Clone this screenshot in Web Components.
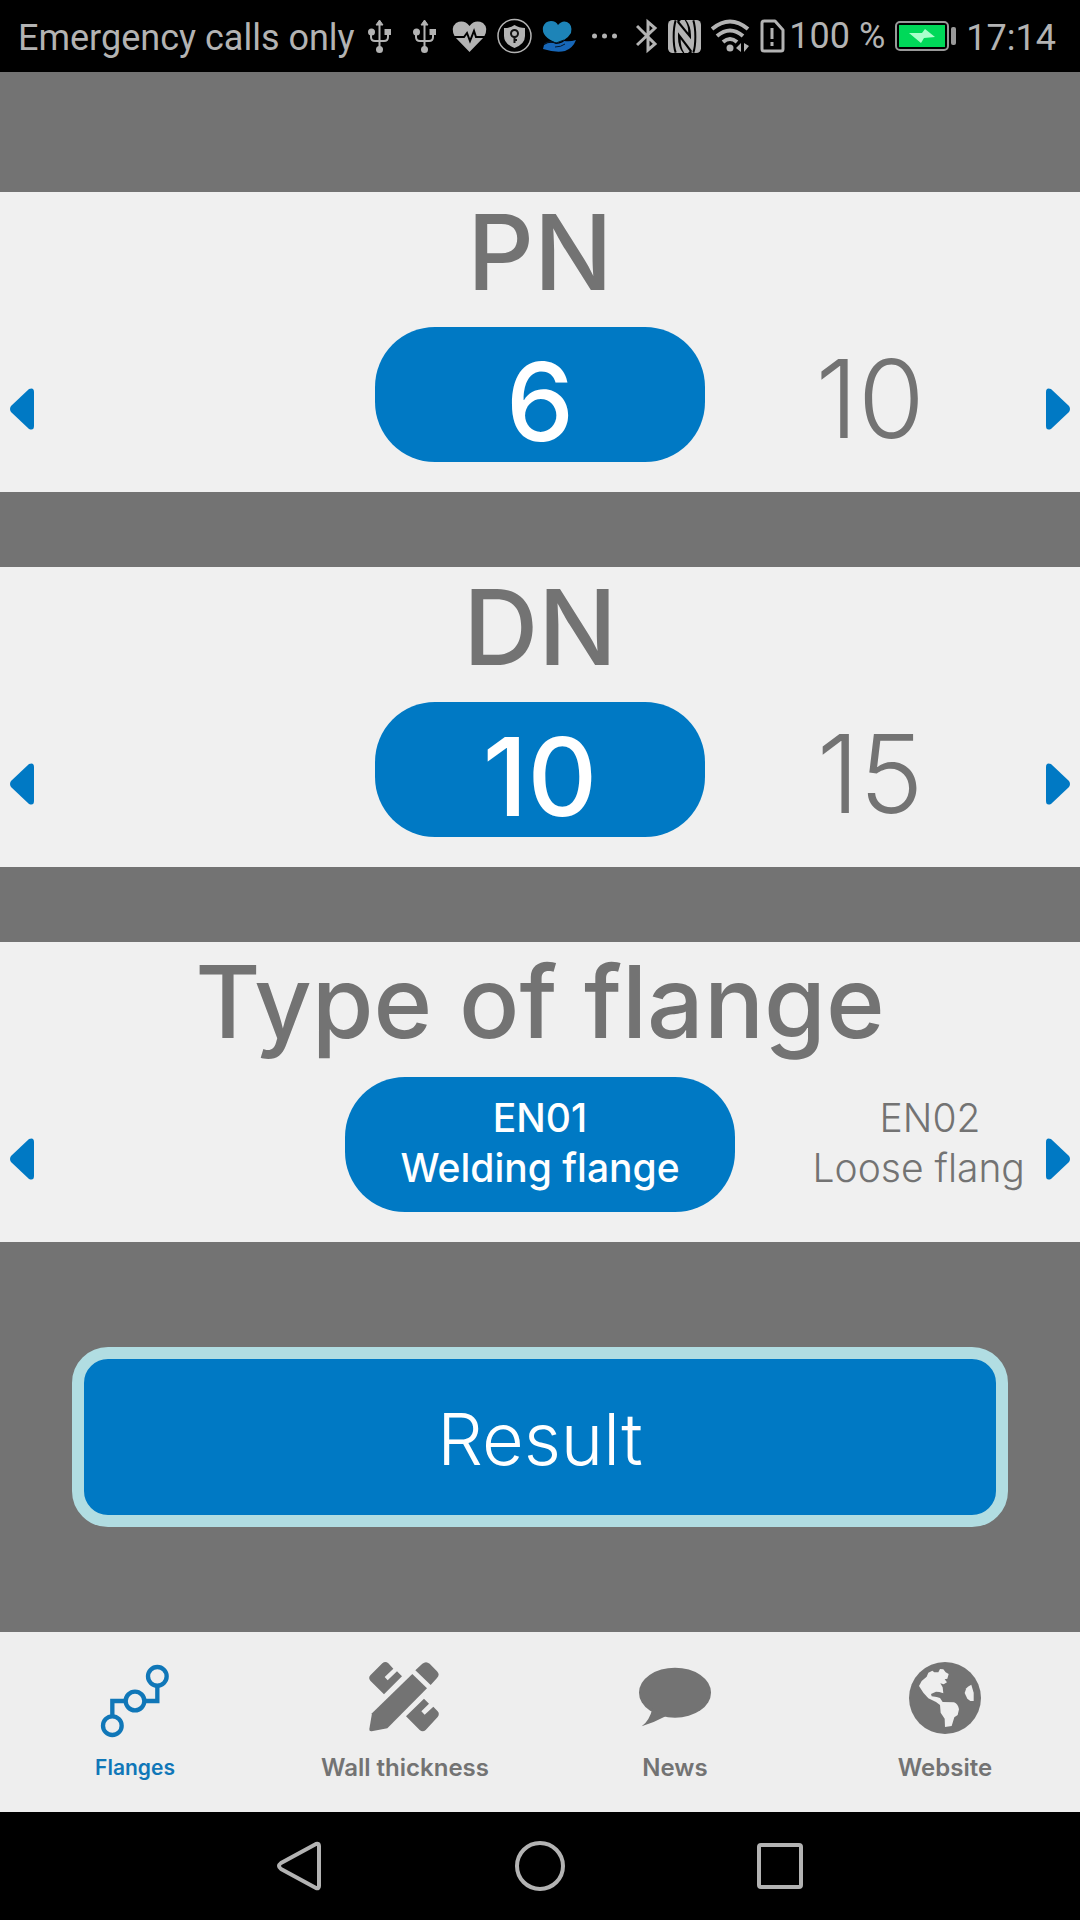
<!DOCTYPE html>
<html lang="en">
<head>
<meta charset="utf-8">
<meta name="viewport" content="width=device-width, initial-scale=1">
<title>Flanges</title>
<style>
    body {
        margin: 0;
        background-color: #737373;
        font-family: Inter, "Liberation Sans", sans-serif;
    }
</style>
</head>
<body>
<flange-app></flange-app>

<script>
class StatusBar extends HTMLElement {
    constructor() {
        super();
        this.shadow = this.attachShadow({ mode: "open" });
    }

    connectedCallback() {
        this.render();
    }

    render() {
        const usb = `
            <svg width="45" height="36" viewBox="0 0 45 36" fill="none" stroke="#b3b3b3" stroke-width="2">
                <path d="M22.500 5V32M14 13V19Q14 23 18 23H27Q31 23 31 19V13"/>
                <path d="M22.500 2L26 7H19Z" fill="#b3b3b3" stroke-width="1"/>
                <circle cx="14.500" cy="14" r="3.500" fill="#b3b3b3" stroke="none"/>
                <path d="M27.500 11H34V17H27.500Z" fill="#b3b3b3" stroke="none"/>
                <circle cx="22.500" cy="31.500" r="3.500" fill="#b3b3b3" stroke="none"/>
            </svg>`;

        this.shadow.innerHTML = `
            <style>
                :host {
                    display: flex;
                    align-items: center;
                    height: 72px;
                    padding: 0 24px 0 18px;
                    background-color: #000;
                    color: #b3b3b3;
                    font-family: Roboto, "Liberation Sans", sans-serif;
                    font-size: 36px;
                    line-height: 72px;
                    white-space: nowrap;
                }

                svg {
                    display: block;
                    flex: none;
                }

                .notifications, .system, .radios, .power {
                    display: flex;
                    align-items: center;
                }

                .notifications {
                    margin-left: 2px;
                }

                .system {
                    margin-left: auto;
                    gap: 4px;
                }

                .radios, .power {
                    gap: 10px;
                }

                .carrier, .clock {
                    padding-top: 4px;
                }
            </style>

            <span class="carrier">Emergency calls only</span>
            <div class="notifications">
                ${usb}
                ${usb}
                <svg width="45" height="36" viewBox="0 0 45 36">
                    <path fill="#b3b3b3" d="M22.500 34L8 19Q3 10 9 5Q17 1 22.500 8Q28 1 36 5Q42 10 37 19Z"/>
                    <path fill="none" stroke="#000" stroke-width="2" d="M5 19H17L20 15L23 23L27 13L29 19H40"/>
                </svg>
                <svg width="45" height="36" viewBox="0 0 45 36">
                    <circle cx="22.500" cy="18" r="16.500" fill="none" stroke="#b3b3b3" stroke-width="1.500"/>
                    <path fill="#b3b3b3" d="M12 10Q18 10 22.500 7Q27 10 33 10V18Q33 26 22.500 30Q12 26 12 18Z"/>
                    <circle cx="22.500" cy="15.500" r="3.500" fill="none" stroke="#111" stroke-width="2"/>
                    <path d="M22.500 19V25M22.500 22H25" stroke="#111" stroke-width="2"/>
                </svg>
                <svg width="45" height="36" viewBox="0 0 45 36">
                    <path fill="#1d84b8" d="M20 25Q4 19 6 9Q8 3 14 3Q19 3 21 7Q25 2 30 4Q36 7 34 15Q31 20 27 22Z"/>
                    <path fill="#1767b8" d="M7 27Q13 23 19 26Q26 25 27 23Q33 24 39 22Q36 30 28 33Q19 35 6 31Z"/>
                    <path fill="none" stroke="#04182c" stroke-width="1" d="M7 26Q13 22 19 25L27 22M18 29Q24 29 28 26"/>
                </svg>
                <svg width="45" height="36" viewBox="0 0 45 36" fill="#b3b3b3">
                    <circle cx="12.500" cy="18" r="2.500"/>
                    <circle cx="22.500" cy="18" r="2.500"/>
                    <circle cx="32.500" cy="18" r="2.500"/>
                </svg>
            </div>
            <div class="system">
                <div class="radios">
                    <svg width="22" height="36" viewBox="0 0 22 36" fill="none" stroke="#b3b3b3" stroke-width="3">
                        <path d="M1 8L19 26L12 32V4L19 10L1 27"/>
                    </svg>
                    <svg width="33" height="33" viewBox="0 0 99 99">
                        <rect width="99" height="99" rx="14" fill="#b3b3b3"/>
                        <path fill="none" stroke="#000" stroke-width="6" d="M23 1Q17 20 17 50T23 98M76 1Q82 20 82 50T76 98"/>
                        <path fill="#000" d="M28 0H54Q69 18 69 48V58L28 8Z"/>
                        <path fill="#000" d="M71 99H45Q30 81 30 51V37L71 91Z"/>
                        <path fill="#b3b3b3" d="M39 0H50Q61 16 61 38L34 5Z"/>
                        <path fill="#b3b3b3" d="M60 99H49Q38 83 38 58L65 94Z"/>
                    </svg>
                    <svg width="39" height="36" viewBox="0 0 39 36" fill="none" stroke="#b3b3b3" stroke-width="4">
                        <path d="M1 11Q19 -4 37 11M6 18Q19 7 32 18M12 24Q19 18 26 24"/>
                        <circle cx="19" cy="30" r="3.500" fill="#b3b3b3" stroke="none"/>
                        <path d="M30 25V34L25 30ZM33 25V34L38 28Z" fill="#b3b3b3" stroke="none"/>
                    </svg>
                    <svg width="25" height="36" viewBox="0 0 25 36">
                        <path fill="none" stroke="#b3b3b3" stroke-width="3" stroke-linejoin="round" d="M4 3H15L23 12V31Q23 33 21 33H4Q2 33 2 31V5Q2 3 4 3Z"/>
                        <path stroke="#b3b3b3" stroke-width="3" d="M12 10V21M12 24V28"/>
                    </svg>
                </div>
                <div class="power">
                    <span>100 %</span>
                    <svg width="61" height="36" viewBox="0 0 61 36">
                        <rect x="1" y="4" width="52" height="28" rx="4" fill="none" stroke="#999" stroke-width="2"/>
                        <rect x="4" y="7" width="46" height="22" fill="#00d959"/>
                        <path fill="#a9ffcb" d="M14 15H27L30 11L40 19L29 20L26 25Z"/>
                        <rect x="56" y="9" width="5" height="18" rx="2" fill="#999"/>
                    </svg>
                    <span class="clock">17:14</span>
                </div>
            </div>
        `;
    }
}

class ValuePicker extends HTMLElement {
    constructor() {
        super();
        this.shadow = this.attachShadow({ mode: "open" });
    }

    connectedCallback() {
        this.render();
    }

    render() {
        this.shadow.innerHTML = `
            <style>
                :host {
                    --item-width: 330px;
                    display: block;
                    height: 300px;
                    background-color: #f0f0f0;
                    color: #737373;
                }

                h2 {
                    margin: 0 0 15px;
                    font-size: 104px;
                    line-height: 120px;
                    font-weight: 500;
                    text-align: center;
                    white-space: nowrap;
                }

                .row {
                    display: grid;
                    grid-template-columns: 57px minmax(0, 1fr) 57px;
                    height: 165px;
                }

                .items {
                    display: grid;
                    grid-template-columns: repeat(3, var(--item-width));
                    grid-template-rows: 135px;
                    justify-content: center;
                    overflow: hidden;
                }

                ::slotted(*) {
                    box-sizing: border-box;
                    display: flex;
                    align-items: center;
                    justify-content: center;
                    border: 0;
                    padding: 8px 0 0;
                    border-radius: 60px;
                    background: none;
                    color: inherit;
                    font: 300 108px/120px Inter, "Liberation Sans", sans-serif;
                    white-space: nowrap;
                }

                ::slotted([aria-pressed="true"]) {
                    grid-column: 2;
                    padding-top: 14px;
                    background-color: #0079c4;
                    color: #fff;
                    font-weight: 500;
                }

                :host([wide]) {
                    --item-width: 390px;
                }

                :host([wide]) h2 {
                    font-size: 100px;
                }

                :host([wide]) ::slotted(*) {
                    padding: 0 0 4px;
                    font-size: 39px;
                    line-height: 50px;
                }

                .arrow {
                    display: flex;
                    align-items: center;
                    border: 0;
                    padding: 0 10px 2px;
                    background: none;
                }

                .next {
                    justify-content: flex-end;
                }
            </style>

            <h2>${this.getAttribute("heading")}</h2>
            <div class="row">
                <button class="arrow" aria-label="Previous">
                    <svg width="24" height="42" viewBox="0 0 24 42"><path fill="#0079c4" d="M1 18L19 1Q24 -1 24 4V38Q24 43 19 41L1 24Q-1 21 1 18Z"/></svg>
                </button>
                <div class="items"><slot></slot></div>
                <button class="arrow next" aria-label="Next">
                    <svg width="24" height="42" viewBox="0 0 24 42"><path fill="#0079c4" d="M23 18L5 1Q0 -1 0 4V38Q0 43 5 41L23 24Q25 21 23 18Z"/></svg>
                </button>
            </div>
        `;
    }
}

class ResultButton extends HTMLElement {
    constructor() {
        super();
        this.shadow = this.attachShadow({ mode: "open" });
    }

    connectedCallback() {
        this.render();
    }

    render() {
        this.shadow.innerHTML = `
            <style>
                :host {
                    display: block;
                    padding: 0 72px;
                }

                button {
                    display: block;
                    width: 100%;
                    height: 180px;
                    border: 12px solid #b1dde2;
                    border-radius: 36px;
                    padding: 4px 0 0;
                    background-color: #0079c4;
                    color: #fff;
                    font: 300 72px/84px Inter, "Liberation Sans", sans-serif;
                }
            </style>

            <button><slot></slot></button>
        `;
    }
}

class TabItem extends HTMLElement {
    constructor() {
        super();
        this.shadow = this.attachShadow({ mode: "open" });
    }

    connectedCallback() {
        this.render();
    }

    render() {
        this.shadow.innerHTML = `
            <style>
                :host {
                    display: block;
                    flex: 1;
                    color: #737373;
                    font-size: 24px;
                    font-weight: 600;
                }

                :host([active]) {
                    color: #1077b8;
                    font-size: 21px;
                }

                a {
                    display: flex;
                    flex-direction: column;
                    align-items: center;
                    gap: 16px;
                    padding-top: 30px;
                    color: inherit;
                    line-height: 28px;
                    text-decoration: none;
                    white-space: nowrap;
                }

                ::slotted(svg) {
                    display: block;
                    width: 72px;
                    height: 76px;
                    overflow: visible;
                }
            </style>

            <a href="#"><slot name="icon"></slot><span><slot></slot></span></a>
        `;
    }
}

class TabBar extends HTMLElement {
    constructor() {
        super();
        this.shadow = this.attachShadow({ mode: "open" });
    }

    connectedCallback() {
        this.render();
    }

    render() {
        this.shadow.innerHTML = `
            <style>
                :host {
                    display: block;
                    background-color: #eee;
                }

                nav {
                    display: flex;
                    height: 180px;
                }
            </style>

            <nav><slot></slot></nav>
        `;
    }
}

class SystemNav extends HTMLElement {
    constructor() {
        super();
        this.shadow = this.attachShadow({ mode: "open" });
    }

    connectedCallback() {
        this.render();
    }

    render() {
        this.shadow.innerHTML = `
            <style>
                :host {
                    display: flex;
                    justify-content: center;
                    height: 108px;
                    background-color: #000;
                }

                button {
                    display: flex;
                    align-items: center;
                    justify-content: center;
                    width: 240px;
                    border: 0;
                    padding: 0;
                    background: none;
                }

                svg {
                    fill: none;
                    stroke: #b3b3b3;
                    stroke-width: 4;
                    stroke-linejoin: round;
                }
            </style>

            <button aria-label="Back"><svg width="50" height="50" viewBox="0 0 50 50"><path d="M6 22L41 3Q44 2 44 5V45Q44 48 41 47L6 28Q2 25 6 22Z"/></svg></button>
            <button aria-label="Home"><svg width="50" height="50" viewBox="0 0 50 50"><circle cx="25" cy="25" r="23"/></svg></button>
            <button aria-label="Recent apps"><svg width="50" height="50" viewBox="0 0 50 50"><rect x="4" y="4" width="42" height="42" rx="2"/></svg></button>
        `;
    }
}

class FlangeApp extends HTMLElement {
    constructor() {
        super();
        this.shadow = this.attachShadow({ mode: "open" });
    }

    connectedCallback() {
        this.render();
    }

    render() {
        this.shadow.innerHTML = `
            <style>
                :host {
                    display: flex;
                    flex-direction: column;
                    min-height: 100vh;
                }

                main {
                    display: flex;
                    flex-direction: column;
                    flex: 1;
                    gap: 75px;
                    padding: 120px 0 105px;
                }

                result-button {
                    margin-top: 30px;
                }
            </style>

            <status-bar></status-bar>
            <main>
                <value-picker heading="PN">
                    <button aria-pressed="true">6</button>
                    <button aria-pressed="false">10</button>
                </value-picker>
                <value-picker heading="DN">
                    <button aria-pressed="true">10</button>
                    <button aria-pressed="false">15</button>
                </value-picker>
                <value-picker heading="Type of flange" wide>
                    <button aria-pressed="true">EN01<br>Welding flange</button>
                    <button aria-pressed="false">EN02<br>Loose flange</button>
                </value-picker>
                <result-button>Result</result-button>
            </main>
            <tab-bar>
                <tab-item active>
                    <svg slot="icon" viewBox="0 0 216 228" fill="none" stroke="currentColor" stroke-width="13">
                        <circle cx="175" cy="43" r="28"/>
                        <circle cx="108" cy="117" r="28"/>
                        <circle cx="40" cy="191" r="28"/>
                        <path d="M40 163V117H80M136 117H175V71"/>
                    </svg>
                    Flanges
                </tab-item>
                <tab-item>
                    <svg slot="icon" viewBox="0 0 216 228" fill="currentColor">
                        <path d="M139 25L160 5Q171 -4 182 5L204 28Q214 38 204 48L185 69Z"/>
                        <path d="M130 36L174 79L55 199L8 208Q0 209 1 201L9 154Z"/>
                        <path d="M45 97L4 56Q-3 48 4 40L40 4Q49 -4 58 4L73 20L47 45L56 55L84 28L99 43Z"/>
                        <path d="M111 163L165 110L180 125L157 148L167 158L193 134L206 148Q213 156 206 165L170 204Q161 212 152 204Z"/>
                    </svg>
                    Wall thickness
                </tab-item>
                <tab-item>
                    <svg slot="icon" viewBox="0 0 216 228" fill="currentColor">
                        <ellipse cx="108" cy="92" rx="108" ry="75"/>
                        <path d="M40 140Q32 175 8 193Q45 182 80 163Z"/>
                    </svg>
                    News
                </tab-item>
                <tab-item>
                    <svg slot="icon" viewBox="0 0 216 228">
                        <circle cx="108" cy="108" r="108" fill="currentColor"/>
                        <path fill="#eee" d="M30 72L38 57L53 44L58 32L70 26L76 31H88L93 21L103 22L110 31L119 36L115 50L107 52L114 61L104 67L94 64L101 76L103 94L91 90L81 89L66 96L68 103L83 105L93 108L101 120L135 121Q147 126 150 142L146 159L136 166L128 192L108 195L107 170L95 152L93 129L81 120L58 109L43 92Z"/>
                        <path fill="#eee" d="M187 68Q176 73 172 79L167 93L175 110L184 117H194V92Z"/>
                    </svg>
                    Website
                </tab-item>
            </tab-bar>
            <system-nav></system-nav>
        `;
    }
}

customElements.define('status-bar', StatusBar);
customElements.define('value-picker', ValuePicker);
customElements.define('result-button', ResultButton);
customElements.define('tab-item', TabItem);
customElements.define('tab-bar', TabBar);
customElements.define('system-nav', SystemNav);
customElements.define('flange-app', FlangeApp);
</script>
</body>
</html>
